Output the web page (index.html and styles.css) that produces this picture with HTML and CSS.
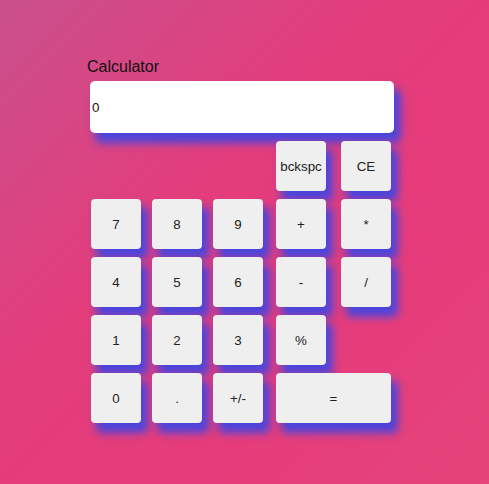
FILE: index.html
```html
<!DOCTYPE html>
<html>
<head>
<meta charset="utf-8">
<link rel="stylesheet" href="styles.css">
</head>
<body>
<div class="calc">
  <div class="title">Calculator</div>
  <div class="display">0</div>
  <div class="keys">
    <button class="key c4">bckspc</button>
    <button class="key c5">CE</button>
    <button class="key">7</button>
    <button class="key">8</button>
    <button class="key">9</button>
    <button class="key">+</button>
    <button class="key">*</button>
    <button class="key">4</button>
    <button class="key">5</button>
    <button class="key">6</button>
    <button class="key">-</button>
    <button class="key">/</button>
    <button class="key">1</button>
    <button class="key">2</button>
    <button class="key">3</button>
    <button class="key">%</button>
    <span></span>
    <button class="key">0</button>
    <button class="key">.</button>
    <button class="key">+/-</button>
    <button class="key wide">=</button>
  </div>
</div>
</body>
</html>
```

FILE: styles.css
```css
html, body {
  margin: 0;
  height: 100%;
}
body {
  background: linear-gradient(135deg, #c9508c 0%, #e43d7c 40%, #e63c7b 70%, #e4447a 100%);
  font-family: "Liberation Sans", Arial, sans-serif;
}
.calc {
  padding: 58px 0 0 87px;
  display: flex;
  flex-direction: column;
  align-items: flex-start;
}
.title {
  font-size: 16px;
  line-height: 18px;
  color: #111;
}
.display {
  margin: 5px 0 0 3px;
  width: 302px;
  height: 52px;
  padding-left: 2px;
  background: #fff;
  border-radius: 5px;
  box-shadow: 6px 9px 9px 1px #4b45db;
  font-size: 13.33px;
  color: #111;
  display: flex;
  align-items: center;
}
.keys {
  margin: 8px 0 0 4px;
  display: grid;
  grid-template-columns: 61px 61px 63px 65px 50px;
  grid-auto-rows: 50px;
  row-gap: 8px;
}
.key {
  width: 50px;
  height: 50px;
  border: none;
  border-radius: 4px;
  background: #efefef;
  color: #222;
  font-family: "Liberation Sans", Arial, sans-serif;
  font-size: 13.33px;
  padding: 0;
  box-shadow: 6px 9px 9px 1px #4b45db;
}
.c4 { grid-column: 4; }
.c5 { grid-column: 5; }
.wide {
  grid-column: 4 / 6;
  width: 115px;
}
```
